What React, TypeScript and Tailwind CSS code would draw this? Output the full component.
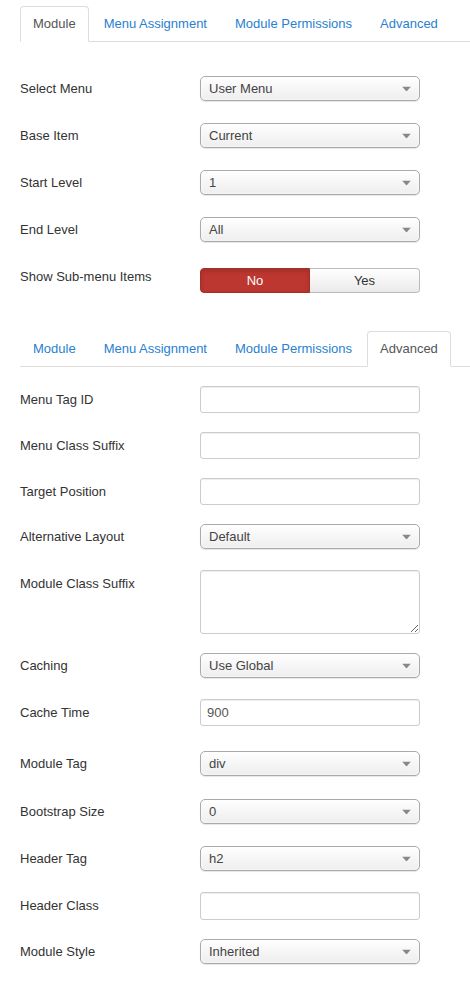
import React from 'react';

const TABS = ['Module', 'Menu Assignment', 'Module Permissions', 'Advanced'];

function Tabs({ active, className }: { active: string; className: string }) {
  return (
    <ul className={`flex border-b border-[#dddddd] ${className}`}>
      {TABS.map(t => (
        <li key={t} className="mr-[2px] -mb-px shrink-0 whitespace-nowrap">
          <a
            className={
              t === active
                ? 'block px-[12px] pt-[8px] pb-[8px] leading-[18px] border border-[#dddddd] border-b-white bg-white rounded-t-[4px] text-[#555555] cursor-default'
                : 'block px-[12px] pt-[8px] pb-[8px] leading-[18px] border border-transparent text-[#2a7fd0] cursor-pointer'
            }
          >
            {t}
          </a>
        </li>
      ))}
    </ul>
  );
}

function Caret() {
  return (
    <svg width="9" height="5" viewBox="0 0 9 5" className="absolute right-[8px] top-1/2 -translate-y-1/2">
      <path d="M0 0h9L4.5 5z" fill="#888888" />
    </svg>
  );
}

function Select({ value }: { value: string }) {
  return (
    <div className="relative w-[220px] h-[25px] border border-[#aaaaaa] rounded-[5px] bg-gradient-to-b from-white via-[#f6f6f6] to-[#eeeeee] shadow-[0_0_3px_white_inset,0_1px_1px_rgba(0,0,0,0.1)] flex items-center pl-[8px] text-[#444444]">
      <span>{value}</span>
      <Caret />
    </div>
  );
}

function Input({ value = '', h = 'h-[27px]' }: { value?: string; h?: string }) {
  return (
    <input
      readOnly
      value={value}
      className={`w-[220px] ${h} border border-[#cccccc] rounded-[3px] px-[6px] text-[#555555] shadow-[inset_0_1px_1px_rgba(0,0,0,0.075)] outline-none bg-white`}
    />
  );
}

function Row({ label, mt, children, labelPt }: { label: string; mt: string; children: React.ReactNode; labelPt?: string }) {
  return (
    <div className={`flex ${labelPt ? 'items-start' : 'items-center'} ${mt}`}>
      <label className={`w-[180px] shrink-0 text-[#333333] ${labelPt ?? ''}`}>{label}</label>
      {children}
    </div>
  );
}

export default function App() {
  return (
    <div className="min-h-[993px] bg-white pl-[20px] text-[13px] leading-[16px]" style={{ fontFamily: '"Liberation Sans", Arial, sans-serif' }}>
      <Tabs active="Module" className="pt-[6px]" />

      <Row label="Select Menu" mt="mt-[34px]"><Select value="User Menu" /></Row>
      <Row label="Base Item" mt="mt-[22px]"><Select value="Current" /></Row>
      <Row label="Start Level" mt="mt-[22px]"><Select value="1" /></Row>
      <Row label="End Level" mt="mt-[22px]"><Select value="All" /></Row>
      <Row label="Show Sub-menu Items" mt="mt-[26px]" labelPt="pt-[1px]">
        <div className="flex w-[220px] h-[25px]">
          <button className="w-[110px] h-full rounded-l-[4px] bg-[#bd362f] border border-[#a1302a] text-white shadow-[inset_0_2px_4px_rgba(0,0,0,0.15)]">
            No
          </button>
          <button className="flex-1 h-full rounded-r-[4px] border border-l-0 border-[#bbbbbb] bg-gradient-to-b from-white to-[#eaeaea] text-[#333333]">
            Yes
          </button>
        </div>
      </Row>

      <Tabs active="Advanced" className="mt-[38px]" />

      <Row label="Menu Tag ID" mt="mt-[19px]"><Input /></Row>
      <Row label="Menu Class Suffix" mt="mt-[19px]"><Input /></Row>
      <Row label="Target Position" mt="mt-[19px]"><Input /></Row>
      <Row label="Alternative Layout" mt="mt-[19px]"><Select value="Default" /></Row>
      <Row label="Module Class Suffix" mt="mt-[21px]" labelPt="pt-[6px]">
        <textarea readOnly className="w-[220px] h-[64px] border border-[#cccccc] rounded-[3px] px-[6px] shadow-[inset_0_1px_1px_rgba(0,0,0,0.075)] outline-none block" />
      </Row>
      <Row label="Caching" mt="mt-[19px]"><Select value="Use Global" /></Row>
      <Row label="Cache Time" mt="mt-[21px]"><Input value="900" /></Row>
      <Row label="Module Tag" mt="mt-[25px]"><Select value="div" /></Row>
      <Row label="Bootstrap Size" mt="mt-[23px]"><Select value="0" /></Row>
      <Row label="Header Tag" mt="mt-[22px]"><Select value="h2" /></Row>
      <Row label="Header Class" mt="mt-[21px]"><Input h="h-[28px]" /></Row>
      <Row label="Module Style" mt="mt-[19px]"><Select value="Inherited" /></Row>
    </div>
  );
}
